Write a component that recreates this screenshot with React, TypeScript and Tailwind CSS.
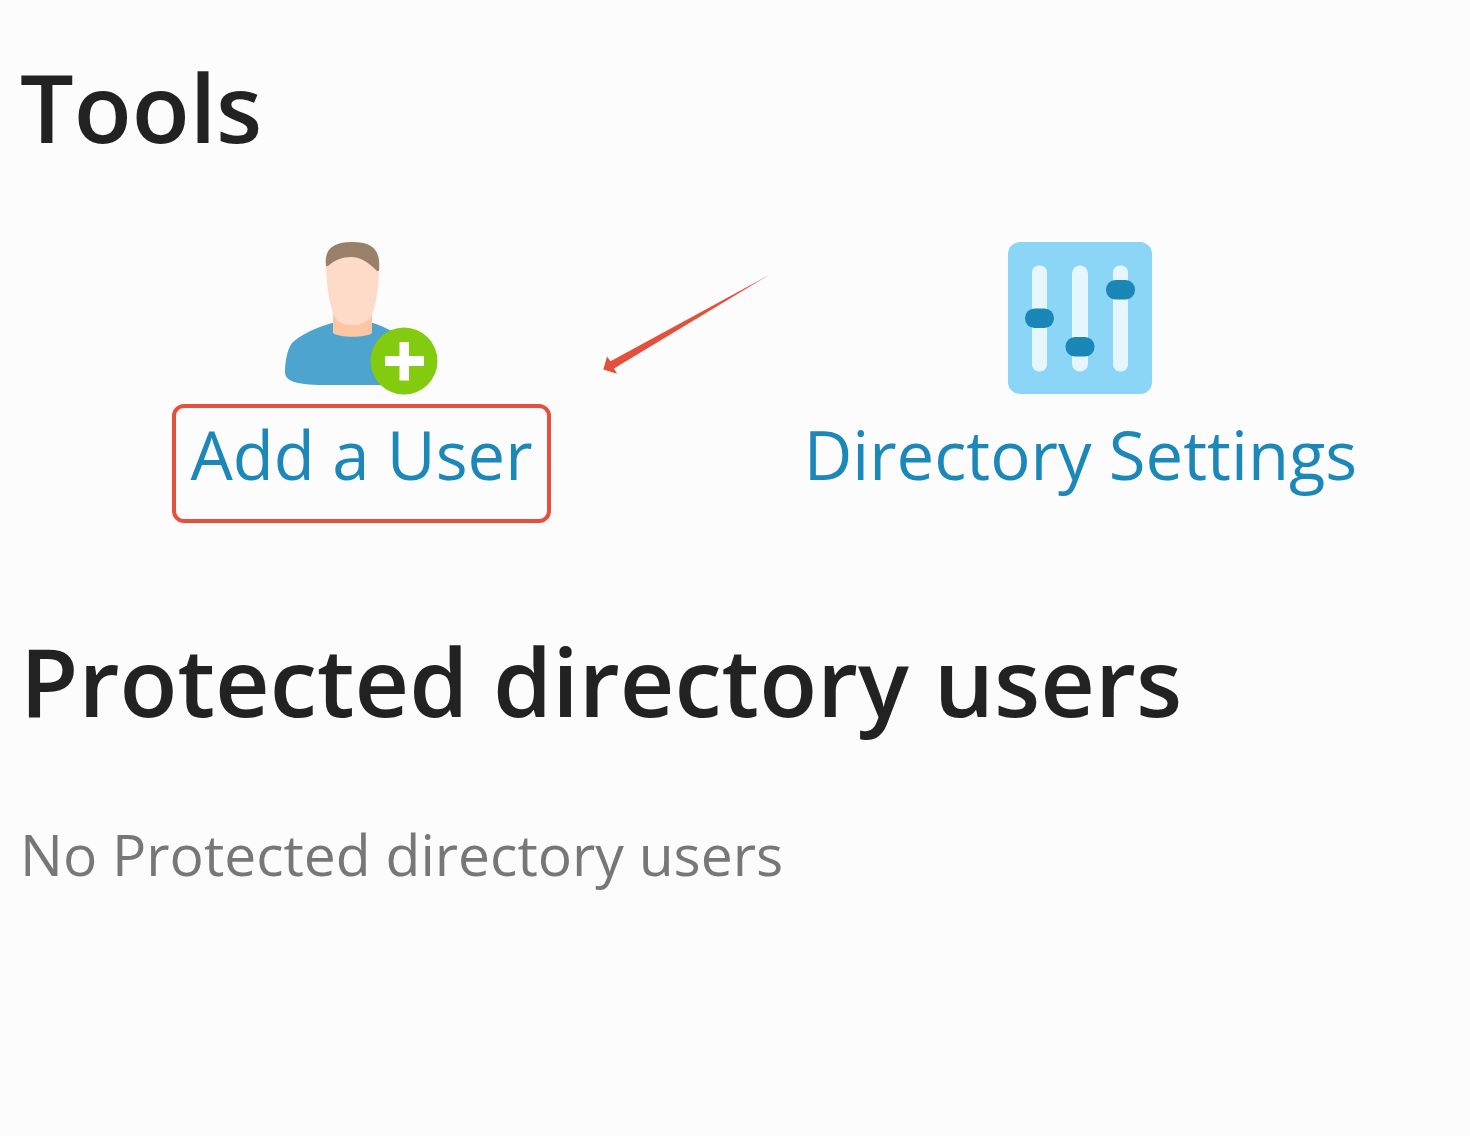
import type { ReactNode } from "react";

interface ToolLinkProps {
  href: string;
  label: string;
  icon: ReactNode;
  highlighted?: boolean;
}

function AddUserIcon() {
  return (
    <svg aria-hidden="true" viewBox="-1 0 152 152" className="size-[152px] overflow-visible">
      {/* Shoulders */}
      <path
        d="M46 81C31 85 14 93 6 101C1 108 -1 120 -1 130C-1 138 7 143 38 143H118V96C110 91 99 85 87 81Z"
        fill="#4ca4cf"
      />
      {/* Neck */}
      <path d="M47 72H86V91C80 96 53 96 47 91Z" fill="#fdc6a3" />
      {/* Face */}
      <path
        d="M40 20C42 8 90 8 93 22C93 41 91 58 87 70C84 80 76 83 66 83C57 83 50 80 47 71C43 58 40 41 40 20Z"
        fill="#fedbc8"
      />
      {/* Hair */}
      <path
        d="M40 24C38 8 46 0 66 0C87 0 95 8 93 29H91C83 21 75 15 65 15C56 15 49 18 42 24Z"
        fill="#9a7f69"
      />
      <circle cx="118" cy="119" r="33.5" fill="#83cb0f" />
      <path d="M113.5 100H123V114H138V124H123V138.5H113.5V124H99V114H113.5Z" fill="#fff" />
    </svg>
  );
}

function SlidersIcon() {
  return (
    <svg aria-hidden="true" viewBox="0 0 144 152" className="h-[152px] w-[144px]">
      <rect width="144" height="152" rx="12" fill="#8bd5f6" />
      <g fill="#e6f6fd">
        <rect x="24" y="23.5" width="15" height="106" rx="7" />
        <rect x="64" y="23.5" width="16" height="106" rx="8" />
        <rect x="105" y="23.5" width="15" height="106" rx="7" />
      </g>
      <g fill="#1b87b7">
        <rect x="17" y="66.5" width="29" height="19.5" rx="9.5" />
        <rect x="57.5" y="95" width="29" height="19.5" rx="9.5" />
        <rect x="98" y="38" width="29" height="19.5" rx="9.5" />
      </g>
    </svg>
  );
}

function PointerArrow() {
  return (
    <svg
      aria-hidden="true"
      viewBox="0 0 170 104"
      className="pointer-events-none absolute top-[30px] -right-[49px] h-[104px] w-[170px]"
    >
      <path d="M3.3 97.5L7 84.5L10.5 89.3L169 3L14 96.5L17 101.7Z" fill="#e5503c" />
    </svg>
  );
}

function ToolLink({ href, label, icon, highlighted = false }: ToolLinkProps) {
  return (
    <li className="relative flex justify-center">
      <a href={href} className="flex flex-col items-center text-[#1c88ba]">
        {icon}
        <span className="relative text-[67px] leading-[120px] whitespace-nowrap">
          {label}
          {highlighted && (
            <span className="absolute -inset-x-[18px] top-2.5 h-[119px] rounded-xl border-4 border-[#e5503c]" />
          )}
        </span>
      </a>
      {highlighted && <PointerArrow />}
    </li>
  );
}

export default function App() {
  return (
    <main className="min-h-screen bg-[#fcfcfc] pt-[46px] font-['Open_Sans',sans-serif]">
      <section>
        <h2 className="px-5 text-[95px] leading-[120px] font-semibold text-[#222]">Tools</h2>
        <ul className="mt-[76px] grid grid-cols-2 pr-[30px] pl-0.5">
          <ToolLink href="#add-user" label="Add a User" icon={<AddUserIcon />} highlighted />
          <ToolLink href="#directory-settings" label="Directory Settings" icon={<SlidersIcon />} />
        </ul>
      </section>

      <section className="mt-[106px] px-5">
        <h2 className="text-[95px] leading-[120px] font-semibold text-[#222]">
          Protected directory users
        </h2>
        <p className="mt-[75px] text-[57px] leading-[78px] text-[#777]">
          No Protected directory users
        </p>
      </section>
    </main>
  );
}
